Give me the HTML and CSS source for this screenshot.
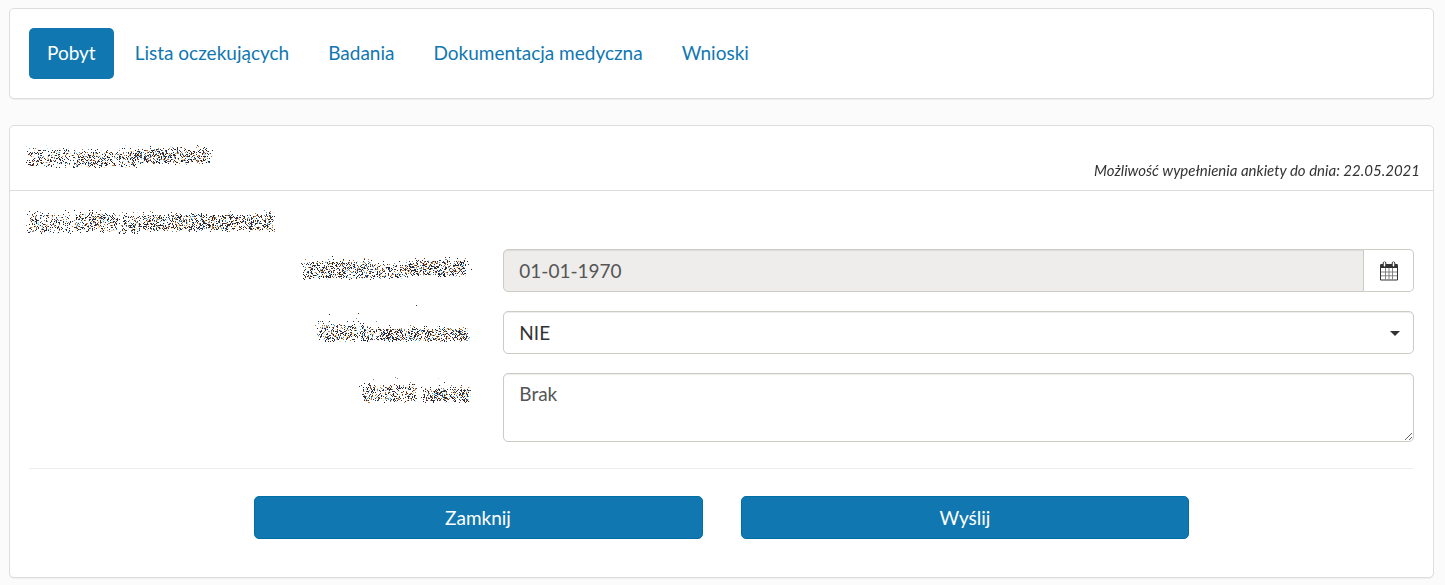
FILE: index.html
```
<!DOCTYPE html>
<html lang="pl">
<head>
    <meta charset="UTF-8">
    <meta name="viewport" content="width=device-width, initial-scale=1.0">
    <title>Pobyt</title>
    <link rel="stylesheet" href="styles.css">
</head>
<body>
    <nav class="panel tabs">
        <a href="#" class="tab active">Pobyt</a>
        <a href="#" class="tab">Lista oczekujących</a>
        <a href="#" class="tab">Badania</a>
        <a href="#" class="tab">Dokumentacja medyczna</a>
        <a href="#" class="tab">Wnioski</a>
    </nav>

    <main class="panel">
        <header class="panel-header">
            <h1 class="title"><canvas class="masked" id="mask-title" width="190" height="24"></canvas></h1>
            <p class="deadline">Możliwość wypełnienia ankiety do dnia: 22.05.2021</p>
        </header>

        <form class="panel-body">
            <h2 class="title"><canvas class="masked" id="mask-section" width="250" height="24"></canvas></h2>

            <div class="form-row">
                <label class="form-label" for="date"><canvas class="masked" id="mask-date" width="172" height="48"></canvas></label>
                <div class="input-group">
                    <input type="text" class="form-control" id="date" value="01-01-1970" readonly>
                    <button type="button" class="calendar-btn" aria-label="Kalendarz">
                        <svg width="18" height="20" viewBox="0 0 18 20">
                            <rect x="0" y="3" width="18" height="16.500" rx="1.200" fill="#333"/>
                            <rect x="1" y="7" width="16" height="11.500" fill="#fff"/>
                            <path d="M5.500 7v11.500M9 7v11.500M12.500 7v11.500M1 11h16M1 14.800h16" stroke="#777" stroke-width="0.900"/>
                            <rect x="2.700" y="0.500" width="3.600" height="5.500" rx="1.600" fill="#333"/>
                            <rect x="11.700" y="0.500" width="3.600" height="5.500" rx="1.600" fill="#333"/>
                            <path d="M4.500 1.800v3M13.500 1.800v3" stroke="#fff" stroke-width="1.500" stroke-linecap="round"/>
                        </svg>
                    </button>
                </div>
            </div>

            <div class="form-row">
                <label class="form-label" for="answer"><canvas class="masked" id="mask-answer" width="172" height="48"></canvas></label>
                <div class="select-wrap">
                    <select class="form-control" id="answer">
                        <option>NIE</option>
                        <option>TAK</option>
                    </select>
                </div>
            </div>

            <div class="form-row">
                <label class="form-label" for="notes"><canvas class="masked" id="mask-notes" width="172" height="48"></canvas></label>
                <textarea class="form-control" id="notes">Brak</textarea>
            </div>

            <hr class="divider">

            <div class="actions">
                <button type="button" class="btn">Zamknij</button>
                <button type="button" class="btn">Wyślij</button>
            </div>
        </form>
    </main>
    <script src="script.js"></script>
</body>
</html>
```

FILE: styles.css
```
* {
    box-sizing: border-box;
}

body {
    margin: 8px 11px 8px 9px;
    background-color: #fbfbfb;
    color: #333;
    font-family: Lato, "Liberation Sans", sans-serif;
    font-size: 19px;
    line-height: 27px;
}

.panel {
    margin-bottom: 26px;
    background-color: #fff;
    border: 1px solid #ddd;
    border-radius: 5px;
    box-shadow: 0 1px 1px rgba(0, 0, 0, 0.05);
}

/* tabs */
.tabs {
    display: flex;
    flex-wrap: wrap;
    gap: 3px;
    padding: 19px;
}

.tab {
    padding: 11px 18px 13px;
    border-radius: 5px;
    color: #1077b1;
    text-decoration: none;
}

.tab.active {
    background-color: #1077b1;
    color: #fff;
}

/* header */
.panel-header {
    display: flex;
    justify-content: space-between;
    align-items: flex-start;
    padding: 19px 13px 6px 16px;
    border-bottom: 1px solid #ddd;
}

.title {
    margin: 0;
    line-height: 0;
}

.deadline {
    margin: 12px 0 0;
    font-size: 15px;
    font-style: italic;
}

/* form */
.panel-body {
    padding: 19px 19px 38px;
}

.panel-body .title {
    margin: 0 0 15px -4px;
}

.form-row {
    display: flex;
    align-items: flex-start;
    gap: 30px;
    margin-bottom: 19px;
}

.form-label {
    flex: none;
    width: calc((100% + 38px) / 3 - 30px);
    line-height: 0;
    text-align: right;
}

.form-label .masked {
    margin-top: -8px;
}

.input-group,
.select-wrap {
    display: flex;
    flex: 1;
    position: relative;
}

.form-control {
    flex: 1;
    min-width: 0;
    height: 43px;
    margin: 0;
    padding: 7px 15px;
    border: 1px solid #cccbc4;
    border-radius: 5px;
    background-color: #fff;
    box-shadow: inset 0 1px 1px rgba(0, 0, 0, 0.075);
    color: #555;
    font: inherit;
}

.form-control[readonly] {
    background-color: #eeedeb;
    border-radius: 5px 0 0 5px;
}

select.form-control {
    appearance: none;
    color: #333;
}

/* caret */
.select-wrap::after {
    content: "";
    position: absolute;
    top: 20px;
    right: 14px;
    border: 5px solid transparent;
    border-top-color: #333;
    border-bottom: 0;
    pointer-events: none;
}

textarea.form-control {
    height: 69px;
    padding-top: 6px;
    resize: vertical;
}

.calendar-btn {
    display: flex;
    justify-content: center;
    align-items: center;
    width: 50px;
    padding: 0;
    border: 1px solid #cccbc4;
    border-left: 0;
    border-radius: 0 5px 5px 0;
    background-color: #fff;
    cursor: pointer;
}

.divider {
    margin: 26px 0 27px;
    border: 0;
    border-top: 1px solid #eee;
}

.actions {
    display: flex;
    justify-content: center;
    gap: 38px;
}

.btn {
    width: calc((100% + 76px) / 3 - 38px);
    height: 43px;
    border: 1px solid #006fa3;
    border-radius: 5px;
    background-color: #1077b1;
    color: #fff;
    font: inherit;
    cursor: pointer;
}
```

FILE: script.js
```
// masked captions are painted as speckle, one entry per word: [left, top, right, bottom, density]
const masks = {
    'mask-title': {
        words: [[3, 5, 44, 21, 0.3], [48, 7, 109, 21, 0.38], [109, 5, 184, 18, 0.44]],
        strays: [[0, 1], [1, 6], [20, 0], [3, 3], [99, 0], [171, 0]]
    },
    'mask-section': {
        words: [[4, 5, 45, 22, 0.3], [50, 4, 92, 21, 0.36], [97, 6, 115, 22, 0.36], [118, 5, 248, 20, 0.4]],
        strays: [[0, 0], [2, 4], [40, 0], [43, 2], [239, 0], [75, 0]]
    },
    'mask-date': {
        words: [[4, 21, 72, 37, 0.38], [72, 24, 105, 36, 0.38], [105, 20, 164, 34, 0.44]],
        strays: [[0, 22], [11, 15], [31, 15], [167, 23], [170, 28], [63, 17]]
    },
    'mask-answer': {
        words: [[19, 22, 63, 37, 0.36], [63, 26, 166, 37, 0.44]],
        strays: [[28, 11], [57, 10], [115, 2], [55, 15], [14, 22], [75, 18]]
    },
    'mask-notes': {
        words: [[62, 21, 114, 36, 0.36], [122, 24, 167, 36, 0.44]],
        strays: [[94, 12], [96, 13], [58, 21], [72, 14], [143, 17], [137, 13]]
    }
};
const colors = ['#222', '#222', '#333', '#333', '#1b2a5c', '#1b2a5c', '#b5743a', '#b5743a', '#4a9bd6', '#ffd9a0', '#b5e4ff', '#5b2a24'];

let seed = 7;
function random() {
    seed = (seed * 16807) % 2147483647;
    return seed / 2147483647;
}

function dot(ctx, x, y) {
    ctx.fillStyle = colors[Math.floor(random() * colors.length)];
    ctx.fillRect(x, y, 1, 1);
}

for (const id in masks) {
    const ctx = document.getElementById(id).getContext('2d');
    masks[id].words.forEach(([left, top, right, bottom, density]) => {
        for (let y = top - 4; y < bottom + 2; y++) {
            for (let x = left - 3; x < right + 3; x++) {
                // thin out around the letters
                let out = Math.max(top - y, y - bottom + 1, left - x, x - right + 1, 0);
                if (random() < density / (1 + out * 2)) {
                    dot(ctx, x, y);
                }
            }
        }
    });
    masks[id].strays.forEach(([x, y]) => dot(ctx, x, y));
}
```
